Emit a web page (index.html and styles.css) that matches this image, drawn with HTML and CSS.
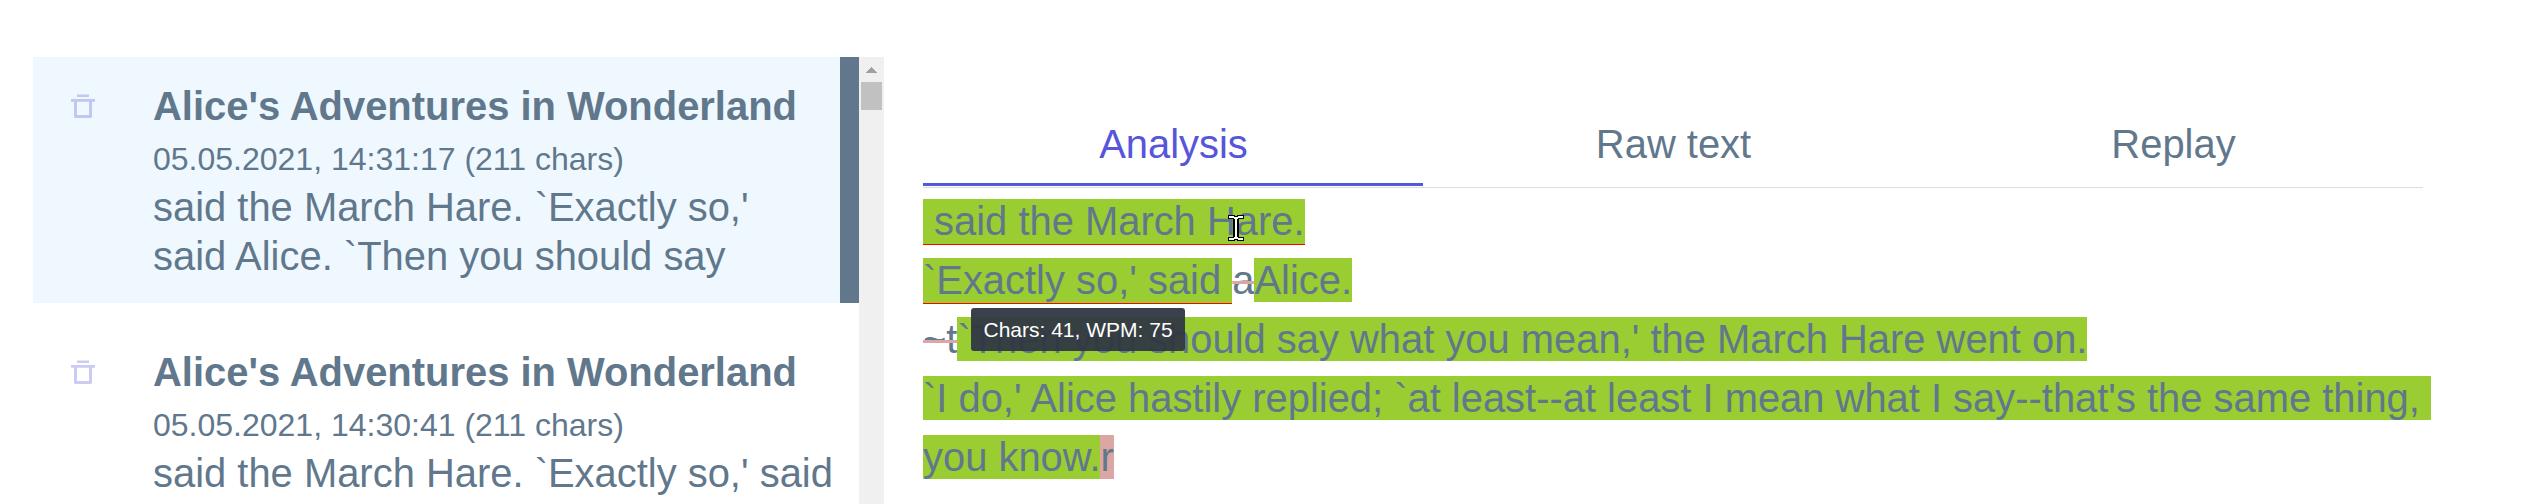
FILE: index.html
```html
<!DOCTYPE html>
<html lang="en">
<head>
<meta charset="utf-8">
<title>Typing history</title>
<link rel="stylesheet" href="styles.css">
</head>
<body>
<div class="app">
  <aside class="history">
    <div class="list">
      <article class="entry active">
        <svg class="trash" viewBox="0 0 24 24"><path d="M6 .4h12V3H6zM0 5h24v2.7H0zM3 7.7h3V21h12V7.7h3V22.500q0 1.500-1.500 1.500h-15Q3 24 3 22.500z"/></svg>
        <div class="entry-body">
          <h2 class="title">Alice's Adventures in Wonderland</h2>
          <div class="date">05.05.2021, 14:31:17 (211 chars)</div>
          <p class="excerpt">said the March Hare. `Exactly so,'<br>said Alice. `Then you should say</p>
        </div>
      </article>
      <article class="entry">
        <svg class="trash" viewBox="0 0 24 24"><path d="M6 .4h12V3H6zM0 5h24v2.7H0zM3 7.7h3V21h12V7.7h3V22.500q0 1.500-1.500 1.500h-15Q3 24 3 22.500z"/></svg>
        <div class="entry-body">
          <h2 class="title">Alice's Adventures in Wonderland</h2>
          <div class="date">05.05.2021, 14:30:41 (211 chars)</div>
          <p class="excerpt">said the March Hare. `Exactly so,' said</p>
        </div>
      </article>
    </div>
    <div class="scrollbar">
      <svg class="arrow" viewBox="0 0 11 6" shape-rendering="crispEdges"><path d="M0 6 5.500 0 11 6z"/></svg>
      <div class="thumb"></div>
    </div>
  </aside>
  <main class="detail">
    <nav class="tabs">
      <a class="tab current">Analysis</a>
      <a class="tab">Raw text</a>
      <a class="tab">Replay</a>
    </nav>
    <div class="analysis">
      <div class="line"><span class="ok hover"> said the March Hare.</span></div>
      <div class="line"><span class="ok hover">`Exactly so,' said </span><span class="removed">a</span><span class="ok">Alice.</span></div>
      <div class="line"><span class="removed">~t</span><span class="ok">`Then you should say what you mean,' the March Hare went on.</span></div>
      <div class="line"><span class="ok">`I do,' Alice hastily replied; `at least--at least I mean what I say--that's the same thing, </span></div>
      <div class="line"><span class="ok">you know.</span><span class="wrong">r</span></div>
      <div class="tooltip">Chars: 41, WPM: 75</div>
      <svg class="cursor" viewBox="0 0 16 26" shape-rendering="crispEdges"><path fill="#000" d="M0 0h7v1h2V0h7v4h-5v18h5v4H9v-1H7v1H0v-4h5V4H0z"/><path fill="#fff" d="M1 1h5v1h4V1h5v2h-5v1H9v18h1v1h5v2h-5v-1H6v1H1v-2h5v-1h1V4H6V3H1z"/></svg>
    </div>
  </main>
</div>
</body>
</html>
```

FILE: styles.css
```css
* { box-sizing: border-box; }

body {
  margin: 0;
  background: #fff;
  color: #61788c;
  font: 39.93px/49px "Liberation Sans", Arial, sans-serif;
}

.app {
  display: flex;
  height: 504px;
  padding: 57px 0 0 33px;
  overflow: hidden;
}

.history {
  display: flex;
  width: 851px;
  flex: none;
  overflow: hidden;
}

.list { width: 826px; }

.entry {
  display: flex;
  gap: 58px;
  height: 246px;
  margin-bottom: 20px;
  padding: 25px 0 0 38px;
}

.entry.active {
  background: #f0f8ff;
  border-right: 19px solid #61788c;
}

.trash {
  width: 24px;
  height: 24px;
  margin-top: 12px;
  flex: none;
  fill: #5755d9;
  opacity: .3;
}

.entry-body { white-space: nowrap; }

.title {
  margin: 0;
  font-size: 39.93px;
  line-height: 49px;
}

.date {
  height: 52px;
  font-size: 32px;
  line-height: 56px;
}

.excerpt { margin: 0; }

.scrollbar {
  display: flex;
  flex-direction: column;
  align-items: center;
  width: 25px;
  padding-top: 10px;
  background: #f0f0f0;
}

.arrow {
  width: 11px;
  height: 6px;
  fill: #a0a0a0;
}

.thumb {
  width: 21px;
  height: 28px;
  margin-top: 9px;
  background: #c1c1c1;
}

.detail {
  width: 1530px;
  margin-left: 39px;
  padding-top: 60px;
}

.tabs {
  display: flex;
  width: 1500px;
  height: 71px;
  border-bottom: 1px solid #dadee4;
}

.tab {
  width: 500px;
  height: 69px;
  padding: 3px 0 0 1px;
  text-align: center;
}

.tab.current {
  color: #5755d9;
  border-bottom: 3px solid #5755d9;
}

.analysis {
  position: relative;
  padding-top: 4px;
  font-size: 39.91px;
  line-height: 59px;
}

.line {
  height: 59px;
  white-space: pre;
}

.ok { background: #9acd32; }

.ok.hover {
  padding-bottom: 1px;
  border-bottom: 1px solid #f00;
}

.removed { text-decoration: line-through 3px #dba6a4; }

.wrong { background: #dba6a4; }

.tooltip {
  position: absolute;
  left: 48px;
  top: 120px;
  padding: 0 12.500px;
  border-radius: 3px;
  background: rgba(48, 55, 66, .95);
  color: #fff;
  font-size: 21px;
  line-height: 43px;
}

.cursor {
  position: absolute;
  left: 305px;
  top: 27px;
  width: 16px;
  height: 26px;
}
```
